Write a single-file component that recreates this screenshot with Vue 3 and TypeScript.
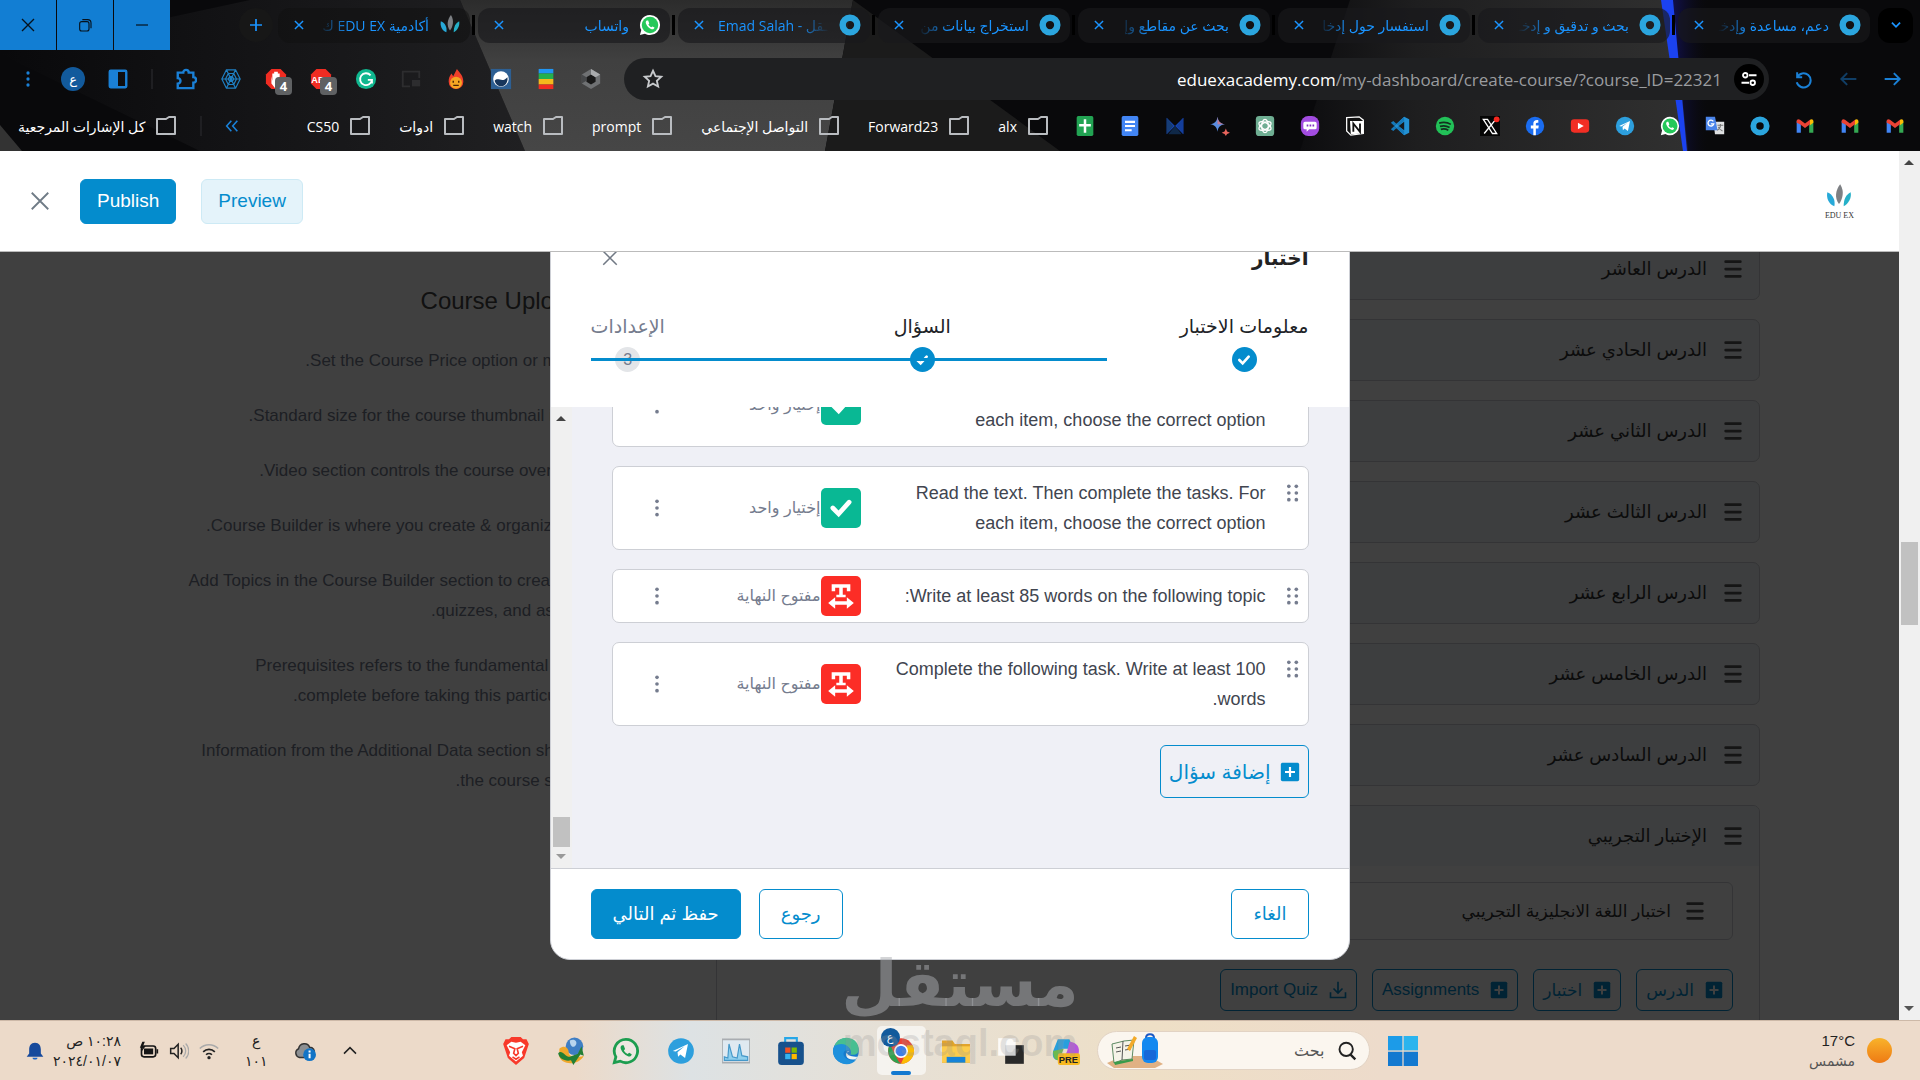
<script setup lang="ts">
interface Tab { title: string; icon: string; ltr?: boolean; active?: boolean }
interface Question { text: string; kind: 'single' | 'open' }

const ring = '<circle cx="12" cy="12" r="8" fill="none" stroke="#2ba5de" stroke-width="7"/>'
const gmail = '<path d="M2 20V6l5 4v10z" fill="#4285f4"/><path d="M17 20V10l5-4v14z" fill="#34a853"/><path d="M2 8V6c0-2 2-3 4-1.500l6 4.500 6-4.500v5.500l-6 4.500-6-4.500z" fill="#ea4335"/><path d="M18 4.500C20 3 22 4 22 6v2l-4 3z" fill="#fbbc04"/>'
const phone = '<path d="M8.500 7c-1 .5-1.500 2-.8 3.500 1 2.600 3 4.800 6 6 1.500.5 3-.2 3.200-1.800l-2.200-1.200-1.300 1c-1.500-.6-2.600-1.800-3.200-3l1-1.200L10 7z"/>'

const icons: Record<string, string> = {
  ring,
  gmail,
  leaf: '<path d="M13 1c4 6 2 13-1 17-4-5-3-12 1-17z" fill="#7d8084"/><path d="M2 8c5 2 7 7 6 12-5-2-7-7-6-12z" fill="#27a9d8"/><path d="M22 8c1 5-2 10-6 12 0-6 2-10 6-12z" fill="#25b0c8"/>',
  whatsapp: `<path d="M12 1a11 11 0 0 1 0 22c-2 0-4-.5-5.500-1.500L1 23l1.500-5.500A11 11 0 0 1 12 1z" fill="#fff"/><circle cx="12" cy="12" r="9" fill="#25c85a"/><g fill="#fff">${phone}</g>`,
  whatsappLine: `<path d="M12 2a10 10 0 1 1-5 18.700L2 22l1.300-5A10 10 0 0 1 12 2z" fill="#fff" fill-opacity=".3" stroke="#1c9d4f" stroke-width="2.400"/><g fill="#1c9d4f">${phone}</g>`,
  close: '<path d="M5 5l14 14M19 5L5 19" fill="none" stroke="currentColor" stroke-width="2.500"/>',
  thinClose: '<path d="M3 3l18 18M21 3L3 21" fill="none" stroke="currentColor" stroke-width="2"/>',
  restore: '<rect x="4" y="7" width="14" height="14" rx="3" fill="none" stroke="currentColor" stroke-width="1.700"/><path d="M8 4h8a5 5 0 0 1 5 5v8" fill="none" stroke="currentColor" stroke-width="1.700"/>',
  minus: '<path d="M3 12h18" stroke="currentColor" stroke-width="1.800"/>',
  plus: '<path d="M12 3v18M3 12h18" stroke="currentColor" stroke-width="2.600"/>',
  chevron: '<path d="M5 8l7 7 7-7" fill="none" stroke="currentColor" stroke-width="3"/>',
  caretUp: '<path d="M3 16l9-9 9 9" fill="none" stroke="currentColor" stroke-width="2.300"/>',
  guillemet: '<path d="M11 4l-7 8 7 8M20 4l-7 8 7 8" fill="none" stroke="currentColor" stroke-width="2.400"/>',
  reload: '<path d="M5 4v6h6M5 10a8.500 8.500 0 1 1-.5 6" fill="none" stroke="currentColor" stroke-width="2.400"/>',
  back: '<path d="M22 12H4M11 5l-7 7 7 7" fill="none" stroke="currentColor" stroke-width="2.300"/>',
  forward: '<path d="M2 12h18M13 5l7 7-7 7" fill="none" stroke="currentColor" stroke-width="2.300"/>',
  tune: '<g fill="none" stroke="currentColor" stroke-width="2.400"><circle cx="7" cy="7" r="3"/><path d="M12 7h10M2 17h10"/><circle cx="17" cy="17" r="3"/></g>',
  star: '<path d="M12 3l2.700 6 6.300.6-4.800 4.300 1.400 6.300L12 17l-5.600 3.200 1.400-6.300L3 9.600 9.300 9z" fill="none" stroke="#c7c9cc" stroke-width="2"/>',
  dots: '<g fill="currentColor"><circle cx="12" cy="4" r="2.200"/><circle cx="12" cy="12" r="2.200"/><circle cx="12" cy="20" r="2.200"/></g>',
  grip: '<g fill="currentColor"><circle cx="7" cy="4" r="2.200"/><circle cx="16" cy="4" r="2.200"/><circle cx="7" cy="12" r="2.200"/><circle cx="16" cy="12" r="2.200"/><circle cx="7" cy="20" r="2.200"/><circle cx="16" cy="20" r="2.200"/></g>',
  panel: '<rect x="3" y="3" width="18" height="18" rx="1" fill="none" stroke="#1a80d6" stroke-width="2.600"/><path d="M3 3h9v18H3z" fill="#1a80d6"/>',
  puzzle: '<path d="M3 5h6c0-4 6-4 6 0h5v5c4 0 4 6 0 6v6H3v-5c4 0 4-6 0-6z" fill="none" stroke="#1a80d6" stroke-width="2.600"/>',
  web: '<g fill="none" stroke="#1f80c4" stroke-width="1.300"><path d="M7 2h10l5 10-5 10H7L2 12zM9 6h6l3 6-3 6H9l-3-6zM10.500 9.500h3l1.500 2.500-1.500 2.500h-3L9 12zM7 2l10 20M17 2L7 22M2 12h20"/></g>',
  hand: '<path d="M7 1h10l6 6v10l-6 6H7l-6-6V7z" fill="#f02c22"/><path d="M7 9v8l4 5 4-1 3-9-2 1V6h-2v5-7h-2v7-7h-2v7-5H8v8z" fill="#fff"/>',
  abp: '<path d="M7 1h10l6 6v10l-6 6H7l-6-6V7z" fill="#f02c22"/><text x="12" y="16" font-size="10" font-weight="700" font-family="Liberation Sans, sans-serif" text-anchor="middle" direction="ltr" fill="#fff">ABP</text>',
  grammar: '<circle cx="12" cy="12" r="11" fill="#10b78f"/><path d="M17 8a6.500 6.500 0 1 0 1.500 5H14M18.500 13v4" fill="none" stroke="#fff" stroke-width="2"/>',
  pip: '<path d="M21 11V4H3v16h8" fill="none" stroke="#2d2d2f" stroke-width="2"/><path d="M13 13h9v7h-9z" fill="#2d2d2f"/>',
  flame: '<path d="M13 1c4 5 7 8 7 14a8 8 0 0 1-16 0c0-4 1-6 3-9l2 3z" fill="#f0402a"/><circle cx="12" cy="16" r="6.500" fill="#f5a623"/><path d="M9 14v2M15 14v2M9 19h6" stroke="#4b2206" stroke-width="1.500"/>',
  wave: '<path d="M1 1h22v22H1z" fill="#2d5f93"/><circle cx="12" cy="12" r="8.500" fill="#fff"/><path d="M5 14c4-5 8 3 14-4 1 6-3 10-7 10-4 0-6-3-7-6z" fill="#17365c"/>',
  stack: '<path d="M4 1h16v5H4z" fill="#2196f3"/><path d="M4 6h16v6H4z" fill="#23b14d"/><path d="M4 12h16v6H4z" fill="#f5b81c"/><path d="M4 18h16v5H4z" fill="#f02c22"/>',
  hexa: '<path d="M12 1l10 6v10l-10 6-10-6V7z" fill="#6f7173"/><path d="M12 7l5 3v5l-5 3-5-3v-5z" fill="#191919"/><path d="M12 1l10 6-5 3-5-3z" fill="#a9abad"/><path d="M2 7v10l5-3v-4z" fill="#46484a"/>',
  folder: '<path d="M3 5h9l3-2h6v17H3z" fill="none" stroke="#b9bcc0" stroke-width="2" stroke-linejoin="round"/>',
  sheets: '<rect x="2" width="20" height="24" rx="2" fill="#22a353"/><path d="M12 4v16M5 11h14" stroke="#fff" stroke-width="3"/>',
  docs: '<rect x="2" width="20" height="24" rx="2" fill="#4285f4"/><path d="M6 7h12M6 12h12M6 17h8" stroke="#fff" stroke-width="2.500"/>',
  envelope: '<path d="M2 2l10 10L22 2v20L12 12 2 22z" fill="#1746b4"/><path d="M2 22V2l8 10z" fill="#163d76"/><path d="M22 22V2l-8 10z" fill="#143e9b"/><path d="M4 22h16l-8-10z" fill="#0f2848"/>',
  sparkle: '<path d="M9 1c1 6 3 8 9 9-6 1-8 3-9 9-1-6-3-8-9-9 6-1 8-3 9-9z" fill="#5a8de0"/><path d="M9 1c1 6 3 8 9 9H9z" fill="#c07a91"/><path d="M19 15l1.500 3.500L24 20l-3.500 1.500L19 24l-1.500-2.500L14 20l3.500-1.500z" fill="#e8645c"/>',
  gpt: '<rect x="1" width="22" height="24" rx="4" fill="#6fae93"/><g fill="none" stroke="#fff" stroke-width="1.500"><ellipse cx="12" cy="12" rx="4" ry="8"/><ellipse cx="12" cy="12" rx="4" ry="8" transform="rotate(60 12 12)"/><ellipse cx="12" cy="12" rx="4" ry="8" transform="rotate(120 12 12)"/></g>',
  bot: '<rect x="1" width="22" height="24" rx="9" fill="#a24ce0"/><path d="M6 7h12a2 2 0 0 1 2 2v5a2 2 0 0 1-2 2h-7l-3 3v-3H6a2 2 0 0 1-2-2V9a2 2 0 0 1 2-2z" fill="#fff"/><path d="M8 11.500h2M11.500 11.500h2M15 11.500h2" stroke="#8332c4" stroke-width="2.400"/>',
  notion: '<path d="M2 2l15-1 5 4v16l-15 2-5-5z" fill="#101010" stroke="#fff" stroke-width="1.500"/><path d="M6 6h16v15L7 22z" fill="#fff"/><path d="M10 19V9l8 10V9" fill="none" stroke="#111" stroke-width="2.200"/>',
  vscode: '<path d="M17 1l6 3v16l-6 3L5 12z" fill="#2391d3"/><path d="M17 7v10l-7-5z" fill="#17191c"/><path d="M1 8l3-2 13 12v5zM1 16l3 2L17 6V1z" fill="#1579ba"/>',
  spotify: '<circle cx="12" cy="12" r="11" fill="#22c158"/><path d="M5 8.500c5-1.500 10-1 14 1.500M6 12.500c4-1.200 8-.8 11.500 1.300M7 16c3-.9 6-.6 9 1" fill="none" stroke="#14301f" stroke-width="2"/>',
  xcom: '<path d="M0 0h24v24H0z" fill="#050505"/><path d="M4 4l11 17h5L9 4zM19 4L5 21" fill="none" stroke="#fff" stroke-width="1.600"/><circle cx="20" cy="4" r="3.500" fill="#f5271e"/>',
  facebook: '<circle cx="12" cy="12" r="11" fill="#1a6cf0"/><path d="M10 23v-8H7v-3.500h3V9c0-3 2-4.500 6-4v3h-1.500C13 8 13 9 13 9.500v2h3.500L16 15h-3v8z" fill="#fff"/>',
  youtube: '<rect x="1" y="4" width="22" height="16" rx="4" fill="#f22e24"/><path d="M9.500 8l7 4-7 4z" fill="#fff"/>',
  telegram: '<circle cx="12" cy="12" r="11" fill="#2d9fdd"/><path d="M5 12l13-6-2.500 12-4-3-2 2-.5-4 6-5-7.500 4.500z" fill="#fff"/>',
  translate: '<path d="M10 7h13v15H12z" fill="#dfe1e3"/><path d="M1 1h11l3 16H1z" fill="#4a84ea"/><path d="M10 6.500a3.500 3.500 0 1 0 .5 3H7" fill="none" stroke="#fff" stroke-width="1.600"/><path d="M15 11h7M18.500 9.500V11c0 3-2 5-4 6M16 13c1 3 3 4 5 5" fill="none" stroke="#777" stroke-width="1.300"/>',
  bars: '<path d="M4 4h16M4 12h16M4 20h16" stroke="currentColor" stroke-width="3" stroke-linecap="round"/>',
  plusBox: '<rect x="1" y="1" width="22" height="22" rx="2" fill="currentColor"/><path d="M12 6v12M6 12h12" stroke="#fff" stroke-width="2.600"/>',
  download: '<path d="M12 1v14M6 10l6 6 6-6M2 15v7h20v-7" fill="none" stroke="currentColor" stroke-width="2.200"/>',
  check: '<path d="M5 12l5 5 9-10" fill="none" stroke="#fff" stroke-width="4" stroke-linecap="round"/>',
  openEnded: '<path d="M4 2h16v6h-3V5h-3.500v6H16v2H8v-2h2.500V5H7v3H4z" fill="#fff"/><path d="M1 18l6-5v3.500h10V13l6 5-6 5v-3.500H7V23z" fill="#fff"/>',
  bell: '<path d="M12 2c5 0 7 4 7 8v5l3 4H2l3-4v-5c0-4 2-8 7-8z" fill="#174a9c"/><path d="M9 20h6c0 3-6 3-6 0z" fill="#1d67c9"/>',
  battery: '<rect x="3" y="6" width="17" height="13" rx="3" fill="none" stroke="#151515" stroke-width="2"/><rect x="6" y="9" width="11" height="7" fill="#151515"/><path d="M21 10h2v5h-2zM4 1L1 8h3l-1 5 5-7H5l2-5z" fill="#151515"/>',
  speaker: '<path d="M2 9h4l5-5v16l-5-5H2z" fill="none" stroke="#222" stroke-width="1.800"/><path d="M14 8c2 2 2 6 0 8" fill="none" stroke="#222" stroke-width="1.800"/><path d="M17 5c4 4 4 10 0 14M20 3c5 5 5 13 0 18" fill="none" stroke="#aaa" stroke-width="1.500"/>',
  wifi: '<g fill="none" stroke-width="2"><path d="M1 9c6-6 16-6 22 0" stroke="#aaa"/><path d="M5 13c4-4 10-4 14 0M8.500 16.500c2-2 5-2 7 0" stroke="#222"/></g><circle cx="12" cy="20" r="2" fill="#222"/>',
  cloud: '<path d="M6 19a5 5 0 0 1-1-9.500C6 3 15 2 17 8c4 0 6 3 5 7l-8 4z" fill="#8c8f92" stroke="#333" stroke-width="1.600"/><circle cx="17" cy="16" r="7" fill="#1274c6"/><path d="M17 15v5M17 11.500v2" stroke="#fff" stroke-width="2.200"/>',
  brave: '<path d="M8 0h8l2 2h3l2 4-1 3-3 9-7 6-7-6-3-9-1-3 2-4h3z" fill="#f8392a"/><path d="M8 4l4 1 4-1 4 3-3 6 1 3-6 5-6-5 1-3-3-6z" fill="#fff"/><path d="M6 8l5 2-1 4 2 2 2-2-1-4 5-2M9 17l3 2 3-2" fill="none" stroke="#f8392a" stroke-width="1.400"/>',
  idm: '<circle cx="15" cy="8" r="7.500" fill="#3f7ec4"/><path d="M11 3c4-2 7 1 5 4s-5 1-5-4z" fill="#b9d5ee"/><path d="M2 10c5-4 8 0 8 3s5 6 13 3c-4 8-18 9-21 1z" fill="#f0a82c"/><path d="M1 14c3-4 6 3 10 3l8-3-2 2 4-8 2 8-3-1-6 9-2-4c-5 1-10-1-11-6z" fill="#237f35"/>',
  chart: '<path d="M0 2h24v20H0z" fill="#dfe9f1" stroke="#a9adb1" stroke-width="1.500"/><path d="M2 20v-3l3 1 1-12 3 11 4 1 2-12 2 10 5 1v3z" fill="#8fd0ee" stroke="#4598c9"/>',
  store: '<path d="M7 5V1h10v4" fill="none" stroke="#26a7e8" stroke-width="1.800"/><rect x="1" y="4" width="22" height="20" rx="3" fill="#17518c"/><path d="M7 9h4.500v4.500H7z" fill="#f25022"/><path d="M12.500 9H17v4.500h-4.500z" fill="#7fba00"/><path d="M7 14.500h4.500V19H7z" fill="#34b2ee"/><path d="M12.500 14.500H17V19h-4.500z" fill="#ffb900"/>',
  edge: '<circle cx="12" cy="12" r="11" fill="#1479cf"/><path d="M2 8C6-3 22-1 23 10c0 4-3 6-7 5 2-7-7-10-14-7z" fill="#47bf91"/><path d="M2 8c7-5 14 0 13 4-5-3-9 5 1 8 2 .5 4 0 5-1C15 28-1 22 1 10z" fill="#1e90dc"/><path d="M15 12c-4 0-3 5 7 5l-2 2c-7 2-11-5-5-7z" fill="#eef4f4"/>',
  chrome: '<circle cx="12" cy="12" r="11" fill="#ea4335"/><path d="M2.500 6.500L10 21l2 2A11 11 0 0 1 2.500 6.500z" fill="#2fa24f"/><path d="M22 7a11 11 0 0 1-10 16l5-11V7z" fill="#fbbc04"/><circle cx="12" cy="12" r="6" fill="#fff"/><circle cx="12" cy="12" r="4.600" fill="#3f7fe8"/>',
  explorer: '<path d="M0 3h9l2 3h13v16H0z" fill="#e2a42c"/><path d="M0 8h24v14H0z" fill="#fccc4d"/><path d="M4 17h16v5H4z" fill="#1583d8"/>',
  taskview: '<path d="M7 7h16v16H7z" fill="#292929"/><path d="M1 1h15v15H1z" fill="#fff" fill-opacity=".85"/>',
  copilot: '<path d="M5 2h10l3 8H9L6 20c-5 0-6-4-5-8z" fill="#299fdc"/><path d="M1 12c0 5 1 8 5 8l4-10z" fill="#6dba4c"/><path d="M15 4c4 0 9 3 8 9-1 7-3 8-8 8H9l4-9z" fill="#b657dc"/><rect x="5" y="14" width="19" height="10" rx="2" fill="#f7b91f"/><text x="14" y="22" font-size="8" font-weight="700" text-anchor="middle" direction="ltr" font-family="Liberation Sans, sans-serif" fill="#222">PRE</text>',
  search: '<circle cx="11" cy="10" r="8" fill="none" stroke="#222" stroke-width="2.300"/><path d="M16 16l6 6" stroke="#222" stroke-width="2.800"/>',
  windows: '<path d="M0 0h11.500v11.500H0z" fill="#1c9be8"/><path d="M12.500 0H24v11.500H12.500z" fill="#2bb4ee"/><path d="M0 12.500h11.500V24H0zM12.500 12.500H24V24H12.500z" fill="#1379d0"/>',
}

const tabs: Tab[] = [
  { title: 'دعم، مساعدة وإدخـ', icon: 'ring' },
  { title: 'بحث و تدقيق و إدخـ', icon: 'ring' },
  { title: 'استفسار حول إدخا', icon: 'ring' },
  { title: 'بحث عن مقاطع وإ', icon: 'ring' },
  { title: 'استخراج بيانات من', icon: 'ring' },
  { title: 'Emad Salah - ـقل', icon: 'ring', ltr: true },
  { title: 'واتساب', icon: 'whatsapp' },
  { title: 'أكادمية EDU EX ك', icon: 'leaf', active: true },
]
const extensions: string[] = ['hexa', 'stack', 'wave', 'flame', 'pip', 'grammar', 'abp', 'hand', 'web', 'puzzle']
const pinned: string[] = ['gmail', 'gmail', 'gmail', 'ring', 'translate', 'whatsapp', 'telegram', 'youtube', 'facebook', 'xcom', 'spotify', 'vscode', 'notion', 'bot', 'gpt', 'sparkle', 'envelope', 'docs', 'sheets']
const folders: string[] = ['alx', 'Forward23', 'التواصل الإجتماعي', 'prompt', 'watch', 'ادوات', 'CS50']
const lessons: string[] = ['الدرس العاشر', 'الدرس الحادي عشر', 'الدرس الثاني عشر', 'الدرس الثالث عشر', 'الدرس الرابع عشر', 'الدرس الخامس عشر', 'الدرس السادس عشر']
const actions = [
  { label: 'الدرس', icon: 'plusBox' },
  { label: 'اختبار', icon: 'plusBox' },
  { label: 'Assignments', icon: 'plusBox' },
  { label: 'Import Quiz', icon: 'download' },
]
const tips: string[] = [
  'Set the Course Price option or make it free.',
  'Standard size for the course thumbnail is 700x430.',
  'Video section controls the course overview video.',
  'Course Builder is where you create & organize a course.',
  'Add Topics in the Course Builder section to create lessons, quizzes, and assignments.',
  'Prerequisites refers to the fundamental courses to complete before taking this particular course.',
  'Information from the Additional Data section shows up on the course single page.',
]
const questions: Question[] = [
  { text: 'Read the text. Then complete the tasks. For each item, choose the correct option', kind: 'single' },
  { text: 'Read the text. Then complete the tasks. For each item, choose the correct option', kind: 'single' },
  { text: 'Write at least 85 words on the following topic:', kind: 'open' },
  { text: 'Complete the following task. Write at least 100 words.', kind: 'open' },
]
const kinds = {
  single: { label: 'إختيار واحد', icon: 'check' },
  open: { label: 'مفتوح النهاية', icon: 'openEnded' },
}
const steps = [
  { label: 'معلومات الاختبار', done: true },
  { label: 'السؤال', done: true },
  { label: 'الإعدادات', done: false },
]
const apps: string[] = ['copilot', 'taskview', 'explorer', 'chrome', 'edge', 'store', 'chart', 'telegram', 'whatsappLine', 'idm', 'brave']
</script>

<template>
  <div class="desktop" dir="rtl">
    <header class="browser">
      <svg class="wallpaper" viewBox="0 0 1920 151" preserveAspectRatio="none" aria-hidden="true">
        <defs>
          <linearGradient id="wedge" x1="0" y1="0" x2="0" y2="1"><stop offset="0" stop-color="#2c2c2c" /><stop offset=".4" stop-color="#404040" /><stop offset="1" stop-color="#464646" /></linearGradient>
          <linearGradient id="shade"><stop offset="0" stop-color="#09090b" /><stop offset="1" stop-color="#202022" /></linearGradient>
          <linearGradient id="glow"><stop offset="0" stop-color="#131260" /><stop offset="1" stop-color="#09090b" stop-opacity="0" /></linearGradient>
          <linearGradient id="ridge"><stop offset="0" stop-color="#0d0d0f" /><stop offset=".3" stop-color="#1e1e1f" /><stop offset="1" stop-color="#303030" /></linearGradient>
        </defs>
        <path d="M0 0h1920v151H0z" fill="#09090b" />
        <path d="M0 54L250 0h210l65 151H200z" fill="url(#shade)" />
        <path d="M0 125l22 26H0z" fill="#333" />
        <path d="M460 0h393l-28 151H525z" fill="url(#wedge)" />
        <path d="M853 0l207 151H825z" fill="#1b1b1b" />
        <path d="M1350 0h322l16 151h-388z" fill="url(#ridge)" />
        <path d="M1668 0h42v151h-26z" fill="url(#glow)" />
        <path d="M1661 0h12l14 151h-4z" fill="#1b42f0" />
      </svg>

      <div class="tab-row">
        <button class="tab-list" aria-label="Search tabs"><svg class="i14" viewBox="0 0 24 24" v-html="icons.chevron" /></button>
        <div v-for="tab in tabs" :key="tab.title" class="tab" :class="{ active: tab.active }">
          <svg class="i22" viewBox="0 0 24 24" v-html="icons[tab.icon]" />
          <span class="tab-title" :class="{ ltr: tab.ltr }" :dir="tab.ltr ? 'ltr' : 'rtl'">{{ tab.title }}</span>
          <button class="plain" aria-label="Close tab"><svg class="i14" viewBox="0 0 24 24" v-html="icons.close" /></button>
        </div>
        <button class="new-tab" aria-label="New tab"><svg class="i16" viewBox="0 0 24 24" v-html="icons.plus" /></button>
        <div class="window-buttons">
          <button aria-label="Minimize"><svg class="i16" viewBox="0 0 24 24" v-html="icons.minus" /></button>
          <button aria-label="Restore"><svg class="i16" viewBox="0 0 24 24" v-html="icons.restore" /></button>
          <button aria-label="Close window"><svg class="i16" viewBox="0 0 24 24" v-html="icons.thinClose" /></button>
        </div>
      </div>

      <div class="toolbar">
        <div class="nav-buttons">
          <button class="plain" aria-label="Forward"><svg class="i20" viewBox="0 0 24 24" v-html="icons.forward" /></button>
          <button class="plain dim" aria-label="Back"><svg class="i20" viewBox="0 0 24 24" v-html="icons.back" /></button>
          <button class="plain" aria-label="Reload"><svg class="i20" viewBox="0 0 24 24" v-html="icons.reload" /></button>
        </div>
        <div class="address">
          <button class="site-info" aria-label="Site information"><svg class="i18" viewBox="0 0 24 24" v-html="icons.tune" /></button>
          <label class="url" dir="ltr"><span>eduexacademy.com</span><input type="text" value="/my-dashboard/create-course/?course_ID=22321" /></label>
          <button class="plain star" aria-label="Bookmark"><svg class="i22" viewBox="0 0 24 24" v-html="icons.star" /></button>
        </div>
        <div class="extensions">
          <button v-for="name in extensions" :key="name" class="plain ext" :aria-label="name">
            <svg class="i22" viewBox="0 0 24 24" v-html="icons[name]" />
            <span v-if="name === 'abp' || name === 'hand'" class="count">4</span>
          </button>
        </div>
        <i class="divider" />
        <div class="extensions">
          <button class="plain ext" aria-label="Side panel"><svg class="i22" viewBox="0 0 24 24" v-html="icons.panel" /></button>
          <button class="plain ext profile" aria-label="Profile">ع</button>
          <button class="plain ext" aria-label="Menu"><svg class="i18" viewBox="0 0 24 24" v-html="icons.dots" /></button>
        </div>
      </div>

      <nav class="bookmarks">
        <a v-for="(name, i) in pinned" :key="i" href="#" class="pin" :aria-label="name"><svg class="i20" viewBox="0 0 24 24" v-html="icons[name]" /></a>
        <a v-for="name in folders" :key="name" href="#" class="folder"><svg class="i24" viewBox="0 0 24 24" v-html="icons.folder" />{{ name }}</a>
        <button class="plain more" aria-label="More bookmarks"><svg class="i16" viewBox="0 0 24 24" v-html="icons.guillemet" /></button>
        <i class="divider" />
        <a href="#" class="folder"><svg class="i24" viewBox="0 0 24 24" v-html="icons.folder" />كل الإشارات المرجعية</a>
      </nav>
    </header>

    <div class="viewport">
      <div class="page-scroll" aria-hidden="true"><i class="arrow up" /><i class="thumb" /><i class="arrow down" /></div>
      <div class="page">
        <div class="page-head">
          <div class="brand"><svg viewBox="0 0 24 24" v-html="icons.leaf" /><span>EDU EX</span></div>
          <div class="page-actions">
            <button class="btn soft">Preview</button>
            <button class="btn solid">Publish</button>
            <button class="plain exit" aria-label="Exit"><svg class="i22" viewBox="0 0 24 24" v-html="icons.thinClose" /></button>
          </div>
        </div>

        <div class="page-body">
          <main class="builder">
            <section class="curriculum">
              <div v-for="lesson in lessons" :key="lesson" class="topic"><svg class="i22" viewBox="0 0 24 24" v-html="icons.bars" />{{ lesson }}</div>
              <div class="topic-open">
                <div class="topic-title"><svg class="i22" viewBox="0 0 24 24" v-html="icons.bars" />الإختبار التجريبي</div>
                <div class="topic-items">
                  <div class="item"><svg class="i22" viewBox="0 0 24 24" v-html="icons.bars" />اختبار اللغة الانجليزية التجريبي</div>
                  <div class="item-actions">
                    <button v-for="a in actions" :key="a.label"><svg class="i18" viewBox="0 0 24 24" v-html="icons[a.icon]" />{{ a.label }}</button>
                  </div>
                </div>
              </div>
            </section>
            <aside class="tips">
              <h2>Course Upload Tips</h2>
              <p v-for="tip in tips" :key="tip">{{ tip }}</p>
            </aside>
          </main>

          <div class="overlay">
            <section class="modal" role="dialog" aria-label="اختبار">
              <div class="modal-head">
                <h1>اختبار</h1>
                <button class="plain" aria-label="Close"><svg class="i18" viewBox="0 0 24 24" v-html="icons.thinClose" /></button>
              </div>
              <ol class="steps">
                <li v-for="(step, i) in steps" :key="step.label" :class="{ done: step.done }">
                  <span>{{ step.label }}</span>
                  <span class="bullet"><svg v-if="step.done" class="i16" viewBox="0 0 24 24" v-html="icons.check" /><template v-else>{{ i + 1 }}</template></span>
                </li>
              </ol>
              <div class="modal-body">
                <div class="questions">
                  <ul>
                    <li v-for="(q, i) in questions" :key="i" class="question">
                      <svg class="grip" viewBox="0 0 24 24" v-html="icons.grip" />
                      <p>{{ q.text }}</p>
                      <span class="kind-icon" :class="q.kind"><svg viewBox="0 0 24 24" v-html="icons[kinds[q.kind].icon]" /></span>
                      <span class="kind">{{ kinds[q.kind].label }}</span>
                      <button class="plain row-menu" aria-label="Options"><svg class="i20" viewBox="0 0 24 24" v-html="icons.dots" /></button>
                    </li>
                  </ul>
                  <button class="add-question"><svg class="i20" viewBox="0 0 24 24" v-html="icons.plusBox" />إضافة سؤال</button>
                </div>
                <div class="list-scroll" aria-hidden="true"><i class="arrow up" /><i class="thumb" /><i class="arrow down" /></div>
              </div>
              <footer class="modal-foot">
                <button class="btn line">الغاء</button>
                <button class="btn line back">رجوع</button>
                <button class="btn solid next">حفظ ثم التالي</button>
              </footer>
            </section>
          </div>
        </div>
      </div>
    </div>

    <footer class="taskbar">
      <div class="weather"><i class="sun" /><div><span>17°C</span><small>مشمس</small></div></div>
      <div class="dock">
        <button class="plain app" aria-label="Start"><svg class="i30" viewBox="0 0 24 24" v-html="icons.windows" /></button>
        <label class="search">
          <svg class="i20" viewBox="0 0 24 24" v-html="icons.search" />
          <input type="search" placeholder="بحث" aria-label="بحث" />
          <svg class="school" viewBox="0 0 58 36" aria-hidden="true">
            <path d="M1 30l16-7h26l14 8-8 4H8z" fill="#e0b184" />
            <path d="M6 11l12-3 10-1-2 19-10 1-8 3z" fill="#f5f3e8" stroke="#5d8a62" />
            <path d="M8 29l19-3v2L9 32z" fill="#3a9b4b" />
            <path d="M17 8l-1 19M10 15l5-1M10 19l5-1M19 13l6-1M19 17l6-1" stroke="#555" />
            <path d="M21 16l7-13 3 2-7 13z" fill="#f3aa29" />
            <path d="M40 5c0-5 8-5 8 0" fill="none" stroke="#1c58c4" stroke-width="2" />
            <rect x="36" y="4" width="16" height="26" rx="6" fill="#1388f0" />
            <rect x="38" y="17" width="12" height="10" rx="2" fill="#1767d8" />
          </svg>
        </label>
        <button v-for="app in apps" :key="app" class="plain app" :class="{ running: app === 'chrome' }" :aria-label="app">
          <svg class="i28" viewBox="0 0 24 24" v-html="icons[app]" />
          <span v-if="app === 'chrome'" class="app-badge">ع</span>
        </button>
      </div>
      <div class="tray">
        <svg class="i16" viewBox="0 0 24 24" v-html="icons.caretUp" />
        <svg class="i22" viewBox="0 0 24 24" v-html="icons.cloud" />
        <div class="lang"><span>ع</span><span>١٠١</span></div>
        <div class="status">
          <svg class="i20" viewBox="0 0 24 24" v-html="icons.wifi" />
          <svg class="i20" viewBox="0 0 24 24" v-html="icons.speaker" />
          <svg class="i20" viewBox="0 0 24 24" v-html="icons.battery" />
        </div>
        <div class="clock"><span>١٠:٢٨ ص</span><span>٢٠٢٤/٠١/٠٧</span></div>
        <svg class="i20" viewBox="0 0 24 24" v-html="icons.bell" />
      </div>
    </footer>

    <div class="watermark" aria-hidden="true"><strong>مستقل</strong><span dir="ltr">mostaql.com</span></div>
  </div>
</template>

<style>
body { margin: 0; overflow: hidden; }
</style>

<style scoped>
.desktop {
  --blue: #048ccd;
  position: relative;
  display: flex;
  flex-direction: column;
  height: 100vh;
  overflow: hidden;
  font-family: "Liberation Sans", "DejaVu Sans", sans-serif;
  font-size: 18px;
}
* { box-sizing: border-box; }
button, input { font: inherit; }
svg { display: block; flex: none; }
ul, ol, p, h1, h2 { margin: 0; padding: 0; list-style: none; }
.i14 { width: 14px; height: 14px; }
.i16 { width: 16px; height: 16px; }
.i18 { width: 18px; height: 18px; }
.i20 { width: 20px; height: 20px; }
.i22 { width: 22px; height: 22px; }
.i24 { width: 24px; height: 24px; }
.i28 { width: 28px; height: 28px; }
.i30 { width: 30px; height: 30px; }
.plain {
  display: flex;
  align-items: center;
  justify-content: center;
  padding: 0;
  border: 0;
  background: none;
  color: inherit;
}

/* browser chrome */
.browser {
  position: relative;
  flex: none;
  height: 151px;
  color: #1a80d6;
  font-family: "Open Sans", "DejaVu Sans", sans-serif;
}
.wallpaper { position: absolute; inset: 0; width: 100%; height: 100%; }
.tab-row, .toolbar, .bookmarks { position: relative; display: flex; align-items: center; }
.tab-row { height: 50px; padding-right: 7px; gap: 8px; font-size: 14px; }
.tab-list { display: grid; place-items: center; width: 35px; height: 35px; padding: 0; border: 0; border-radius: 12px; background: #000; color: #1a94ff; }
.tab {
  position: relative;
  display: flex;
  flex: 0 1 192px;
  align-items: center;
  min-width: 0;
  height: 35px;
  padding: 0 9px 0 14px;
  border-radius: 12px;
  background: rgba(25, 25, 27, .65);
  color: #1a94ff;
}
.tab.active { background: rgba(15, 15, 16, .5); }
.tab:not(.active)::before { content: ""; position: absolute; left: -6px; width: 3px; height: 20px; background: #000; }
.tab-title {
  flex: 1;
  margin: 0 10px 0 12px;
  overflow: hidden;
  white-space: nowrap;
  mask-image: linear-gradient(to right, transparent, #000 32px);
}
.tab-title.ltr { mask-image: linear-gradient(to left, transparent, #000 32px); }
.new-tab { display: grid; place-items: center; width: 34px; height: 34px; margin-right: -3px; padding: 0; border: 0; border-radius: 50%; background: #171717; color: #1a94ff; }
.window-buttons { display: flex; gap: 1px; margin-right: auto; }
.window-buttons button { display: grid; place-items: center; width: 56px; height: 50px; padding: 0; border: 0; background: #127ed3; color: #06121d; }
.toolbar { height: 58px; padding: 0 17px; }
.nav-buttons { display: flex; gap: 25px; }
.dim { opacity: .45; }
.address { display: flex; flex: 1; align-items: center; height: 42px; margin: 0 24px 0 22px; padding: 0 5px 0 18px; border-radius: 21px; background: #1f2022; }
.site-info { display: grid; place-items: center; width: 30px; height: 30px; padding: 0; border: 0; border-radius: 50%; background: #000; color: #fff; }
.url { display: flex; margin-right: 12px; color: #fff; font-size: 17px; }
.url input { field-sizing: content; padding: 0; border: 0; outline: 0; background: none; color: #9a9c9f; }
.star { margin-right: auto; }
.extensions { display: flex; align-items: center; gap: 23px; }
.ext { position: relative; width: 22px; height: 24px; }
.count { position: absolute; top: 10px; left: 10px; width: 17px; height: 18px; border-radius: 4px; background: #5f6163; color: #fff; font-size: 13px; font-weight: 700; line-height: 18px; text-align: center; }
.profile { width: 24px; margin: 0 -1px; border-radius: 50%; background: #125a9c; color: #fff; font-size: 13px; }
.divider { flex: none; width: 2px; height: 20px; margin: 0 22px; background: #1f1f22; }
.bookmarks { height: 36px; padding: 0 15px 0 18px; color: #fff; font-size: 14px; }
.bookmarks a { color: inherit; text-decoration: none; }
.pin { margin-left: 25px; }
.folder { display: flex; align-items: center; gap: 9px; margin-left: 27px; white-space: nowrap; }
.folder:last-child { margin-left: 0; }
.more { margin-right: auto; color: #1a80d6; }

/* page */
.viewport { display: flex; flex: 1; min-height: 0; }
.page-scroll { position: relative; width: 21px; background: #f0f0f0; }
.arrow { position: absolute; left: 5px; border: 5px solid transparent; }
.arrow.up { top: 4px; border-bottom-color: #444; }
.arrow.down { bottom: 4px; border-top-color: #555; }
.page-scroll .thumb { position: absolute; top: 45%; left: 2px; width: 17px; height: 83px; background: #c1c1c1; }
.page { display: flex; flex: 1; flex-direction: column; min-width: 0; }
.page-head { display: flex; flex: none; align-items: center; justify-content: space-between; height: 101px; padding: 0 45px 0 25px; border-bottom: 1px solid #bbb; background: #fff; }
.brand { display: flex; flex-direction: column; align-items: center; color: #333; font: 8px "Liberation Serif", serif; }
.brand svg { width: 28px; height: 28px; }
.page-actions { display: flex; align-items: center; gap: 25px; }
.btn { padding: 0 21px; border: 1px solid var(--blue); border-radius: 6px; background: #fff; color: var(--blue); }
.btn.solid { background: var(--blue); color: #fff; }
.page-actions .btn { height: 45px; padding: 0 16px; font-size: 19px; }
.page-actions .soft { border-color: #cdeaf5; background: #e4f3fa; }
.exit { width: 30px; color: #6f7b86; }
.page-body { position: relative; flex: 1; min-height: 0; overflow: hidden; background: #fff; }
.builder { display: flex; gap: 85px; height: 100%; padding-right: 139px; overflow: hidden; }
.curriculum { flex: none; width: 59.3%; margin-top: -14px; color: #333; }
.topic, .topic-title { display: flex; align-items: center; gap: 15px; height: 62px; padding: 0 15px; background: #f1f5f9; }
.topic { margin-bottom: 19px; border: 1px solid #cdcfd5; border-radius: 7px; }
.topic-open { height: 260px; border: 1px solid #cdcfd5; border-radius: 7px; overflow: hidden; }
.topic-title { height: 60px; }
.topic-items { padding: 16px 26px; }
.item { display: flex; align-items: center; gap: 13px; height: 58px; margin-bottom: 29px; padding: 0 26px; border: 1px solid #cdcfd5; border-radius: 6px; font-size: 17px; }
.topic svg, .topic-title svg, .item svg { color: #555; }
.item-actions { display: flex; gap: 15px; font-size: 17px; }
.item-actions button { display: flex; align-items: center; gap: 11px; height: 42px; padding: 0 9px; border: 1px solid var(--blue); border-radius: 6px; background: none; color: var(--blue); }
.tips { flex: none; width: 448px; padding-top: 34px; color: #757c8e; font-size: 17px; line-height: 30px; }
.tips h2 { margin-bottom: 30px; color: #444; font-size: 24px; font-weight: 400; }
.tips p { margin-bottom: 25px; }

/* quiz dialog */
.overlay { position: absolute; inset: 0; display: flex; justify-content: center; align-items: flex-start; background: rgba(0, 0, 0, .75); }
.modal { display: flex; flex-direction: column; width: 800px; height: 728px; margin-top: -20px; border: 1px solid #cdcfd5; border-radius: 20px; overflow: hidden; background: #fff; }
.modal-head { display: flex; flex: none; align-items: center; justify-content: space-between; height: 50px; padding: 0 40px 0 50px; color: #717984; }
.modal-head h1 { color: #222; font-size: 20px; }
.steps { position: relative; display: flex; flex: none; justify-content: space-between; height: 124px; padding: 29px 40px 0; color: #757c8e; font-size: 19px; line-height: 30px; }
.steps li { display: flex; flex-direction: column; align-items: center; gap: 5px; }
.steps .done { color: #212327; }
.steps::after { content: ""; position: absolute; top: 75px; left: 40px; width: 516px; height: 3px; background: var(--blue); }
.bullet { display: grid; place-items: center; width: 25px; height: 25px; border-radius: 50%; background: #e3e5e8; font-size: 16px; line-height: 25px; }
.done .bullet { background: var(--blue); }
.modal-body { display: flex; flex: 1; min-height: 0; background: #eff0f6; }
.questions { display: flex; flex: 1; flex-direction: column; align-items: flex-start; justify-content: flex-end; padding: 0 40px 70px; overflow: hidden; }
.questions ul { width: 100%; }
.question { display: flex; align-items: center; margin-bottom: 19px; padding: 11px 5px 11px 36px; border: 1px solid #cdcfd5; border-radius: 7px; background: #fff; color: #41454f; line-height: 30px; }
.grip { align-self: flex-start; width: 20px; height: 20px; margin: 5px 0 0 17px; color: #757c8e; }
.question p { width: 372px; }
.kind-icon { display: grid; place-items: center; width: 40px; height: 40px; margin: -5px 33px -5px 0; border-radius: 5px; }
.kind-icon svg { width: 28px; height: 28px; }
.kind-icon.single { background: #09b894; }
.kind-icon.open { background: #fc2d26; }
.kind { color: #757c8e; font-size: 16px; }
.row-menu { width: 16px; margin-right: auto; color: #757c8e; }
.add-question { display: flex; flex: none; align-items: center; gap: 9px; height: 53px; padding: 0 8px; border: 1px solid var(--blue); border-radius: 6px; background: none; color: var(--blue); font-size: 20px; }
.list-scroll { position: relative; width: 21px; background: #f0f0f0; }
.list-scroll .thumb { position: absolute; bottom: 21px; left: 2px; width: 17px; height: 30px; background: #c1c1c1; }
.list-scroll .down { border-top-color: #999; }
.modal-foot { display: flex; flex: none; align-items: center; height: 91px; padding: 0 40px; border-top: 1px solid #cdcfd5; }
.modal-foot .btn { height: 50px; }
.modal-foot .back { margin-right: auto; margin-left: 18px; }

/* taskbar */
.taskbar { display: grid; flex: none; grid-template-columns: 1fr auto 1fr; align-items: center; height: 60px; padding: 0 28px 0 17px; border-top: 1px solid #cdb9a8; background: linear-gradient(to right, #ecdac9 30%, #dde2e4 36%, #e6e0d6 46%, #eedfc6 60%, #eddbcb 72%); color: #222; }
.weather, .tray, .dock, .status { display: flex; align-items: center; }
.weather { gap: 12px; font-size: 15px; }
.weather span, .weather small, .lang span, .clock span { display: block; line-height: 20px; }
.weather small { color: #555; font-size: 14px; }
.sun { width: 25px; height: 25px; border-radius: 50%; background: linear-gradient(#f9b32a, #ee7a14); }
.app { position: relative; width: 49px; height: 49px; margin-left: 6px; }
.app:first-child { width: 30px; margin-left: 18px; }
.app:last-child { margin-left: 0; }
.running { border-radius: 5px; background: rgba(255, 255, 255, .6); }
.running::after { content: ""; position: absolute; bottom: 0; width: 20px; height: 4px; border-radius: 2px; background: #1379d0; }
.app-badge { position: absolute; top: 2px; left: 4px; width: 19px; height: 19px; border-radius: 50%; background: #125a9c; color: #fff; font-size: 11px; line-height: 19px; }
.search { display: flex; align-items: center; gap: 12px; width: 273px; height: 39px; margin-left: 6px; padding: 0 12px 0 8px; border: 1px solid #e2d3c4; border-radius: 20px; background: #fbf6ef; }
.search input { flex: 1; min-width: 0; padding: 0; border: 0; background: none; font-size: 16px; }
.search input::placeholder { color: #555; }
.school { width: 58px; height: 36px; }
.tray { justify-content: flex-end; gap: 26px; padding-left: 8px; font-size: 14px; }
.lang { text-align: center; }
.status { gap: 10px; }
.clock { margin: 0 -8px 0 -18px; }

.watermark { position: absolute; bottom: 18px; left: 845px; display: flex; flex-direction: column; align-items: center; width: 230px; color: rgba(170, 172, 176, .5); line-height: 1; }
.watermark strong { font: 700 65px/80px "DejaVu Sans", sans-serif; }
.watermark span { color: rgba(150, 150, 150, .25); font-size: 38px; font-weight: 700; }
</style>
